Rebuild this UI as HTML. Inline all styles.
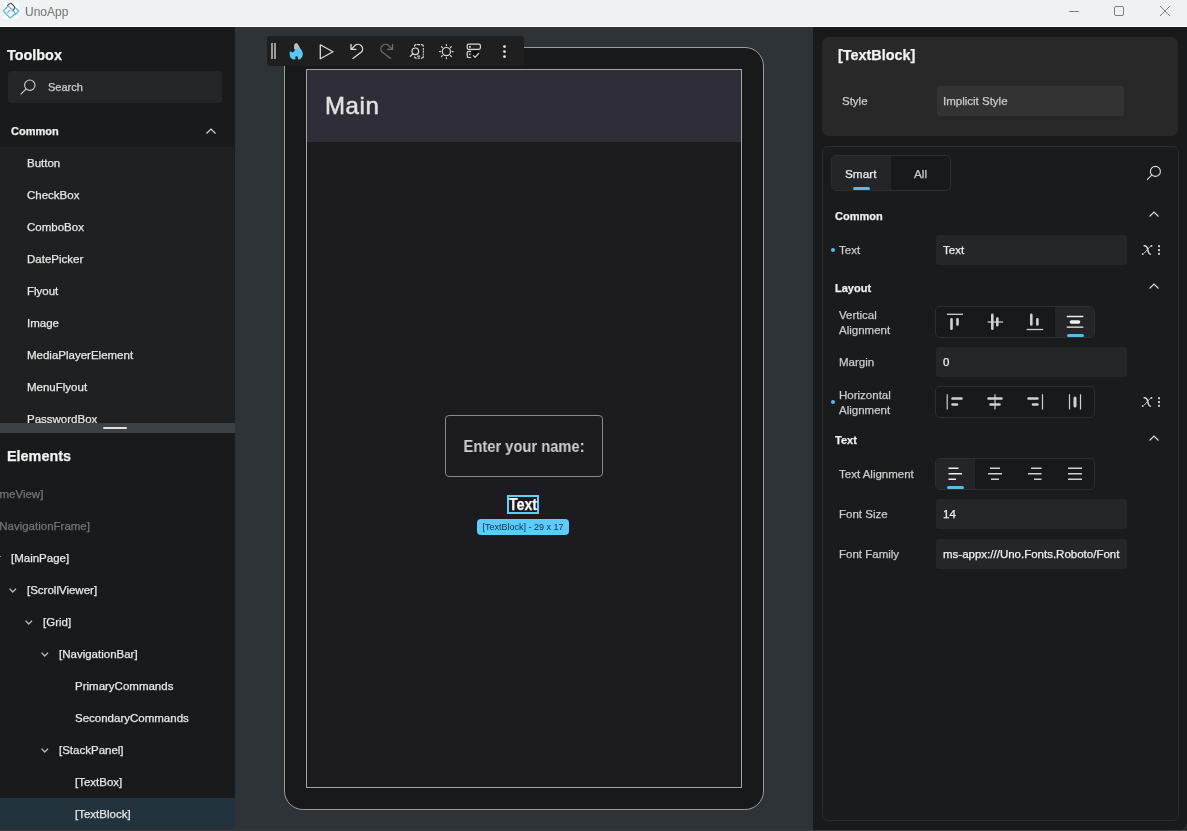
<!DOCTYPE html>
<html><head><meta charset="utf-8">
<style>
*{margin:0;padding:0;box-sizing:border-box}
html,body{-webkit-font-smoothing:antialiased;width:1187px;height:831px;overflow:hidden;background:#191a1c;font-family:"Liberation Sans",sans-serif;font-size:11.5px;color:#e4e4e4;position:relative}
.a{position:absolute}
.t{position:absolute;white-space:nowrap;line-height:14px;will-change:transform;-webkit-text-stroke:0.25px currentColor}
.b{font-weight:bold}
svg{position:absolute;overflow:visible}
</style></head><body>
<!-- ===== title bar ===== -->
<div class="a" style="left:0;top:0;width:1187px;height:26px;background:#eff2f3"></div>
<div class="a" style="left:0;top:26px;width:1187px;height:1px;background:#fdfdfd"></div>
<div class="a" style="left:3px;top:3px;width:16px;height:16px;background:#fafafa"></div>
<svg style="left:2px;top:2px" width="18" height="18" viewBox="0 0 18 18">
  <g fill="none" stroke-width="1.15" stroke-linejoin="round">
    <path d="M5.2 3.9 L7.6 1.6 Q8.6 0.8 9.6 1.7 L12.4 4.6 Q12.9 5.3 12.5 6.2 L10.6 9.2" stroke="#4a4a4a"/>
    <path d="M1.8 8.4 L5.7 4.6 Q6.3 4.1 6.9 4.6 L12.8 10.6 Q13.2 11.2 12.6 11.8 L9 15.6 Q8.4 16.2 7.8 15.6 L1.8 9.7 Q1.3 9.1 1.8 8.4 Z" stroke="#45b0ef"/>
    <path d="M13.2 5.6 L16.3 8.5 Q16.8 9.1 16.3 9.7 L12.6 13.2 M5.3 10.9 L8 8.2" stroke="#45b0ef"/>
  </g>
</svg>
<div class="t" style="left:25px;top:4px;font-size:12px;line-height:16px;color:#7a7a7a;-webkit-text-stroke:0.1px #7a7a7a">UnoApp</div>
<!-- window controls -->
<div class="a" style="left:1069px;top:11px;width:10px;height:1px;background:#7e7e7e"></div>
<div class="a" style="left:1114px;top:6px;width:10px;height:10px;border:1px solid #7e7e7e;border-radius:2px"></div>
<svg style="left:1160px;top:6px" width="10" height="10" viewBox="0 0 10 10"><path d="M0 0L10 10M10 0L0 10" stroke="#7e7e7e" stroke-width="1"/></svg>

<!-- ===== left panel ===== -->
<div class="a" style="left:0;top:27px;width:235px;height:803px;background:#191a1c"></div>
<div class="t b" style="left:7px;top:47px;font-size:14.4px;line-height:17px;color:#f2f2f2">Toolbox</div>
<div class="a" style="left:8px;top:71px;width:214px;height:32px;background:#252628;border-radius:4px"></div>
<svg style="left:20px;top:79px" width="16" height="16" viewBox="0 0 16 16"><circle cx="9.8" cy="6.2" r="5.2" fill="none" stroke="#cfcfcf" stroke-width="1.1"/><path d="M6.1 9.9 L0.7 15.3" stroke="#cfcfcf" stroke-width="1.1"/></svg>
<div class="t" style="left:48px;top:80px;font-size:11px;color:#cfcfcf">Search</div>
<div class="t b" style="left:11px;top:124px;font-size:11px;color:#eeeeee">Common</div>
<svg style="left:206px;top:128px" width="10" height="6" viewBox="0 0 10 6"><path d="M0.5 5.5 L5 1 L9.5 5.5" fill="none" stroke="#dcdcdc" stroke-width="1.1"/></svg>
<div class="a" style="left:0;top:147px;width:235px;height:276px;background:#1f2022"></div>
<div class="a" style="left:234px;top:27px;width:1px;height:803px;background:#1c1d1e"></div>
<div class="t" style="left:27px;top:156px;color:#e8e8e8">Button</div>
<div class="t" style="left:27px;top:188px;color:#e8e8e8">CheckBox</div>
<div class="t" style="left:27px;top:220px;color:#e8e8e8">ComboBox</div>
<div class="t" style="left:27px;top:252px;color:#e8e8e8">DatePicker</div>
<div class="t" style="left:27px;top:284px;color:#e8e8e8">Flyout</div>
<div class="t" style="left:27px;top:316px;color:#e8e8e8">Image</div>
<div class="t" style="left:27px;top:348px;color:#e8e8e8">MediaPlayerElement</div>
<div class="t" style="left:27px;top:380px;color:#e8e8e8">MenuFlyout</div>
<div class="t" style="left:27px;top:412px;color:#e8e8e8">PasswordBox</div>
<!-- splitter -->
<div class="a" style="left:0;top:423px;width:235px;height:10px;background:#3b4144"></div>
<div class="a" style="left:103px;top:427px;width:24px;height:2px;background:#e0e0e0;border-radius:1px"></div>
<div class="t b" style="left:7px;top:448px;font-size:14.4px;line-height:17px;color:#f2f2f2">Elements</div>
<div class="t" style="left:-21px;top:487px;color:#757575">[FrameView]</div>
<div class="t" style="left:-4px;top:519px;color:#757575">[NavigationFrame]</div>
<div class="t" style="left:11px;top:551px;color:#e8e8e8">[MainPage]</div>
<svg style="left:9px;top:588px" width="8" height="5" viewBox="0 0 8 5"><path d="M0.6 0.8 L3.8 4 L7 0.8" fill="none" stroke="#b8b8b8" stroke-width="1.3"/></svg>
<div class="t" style="left:27px;top:583px;color:#e8e8e8">[ScrollViewer]</div>
<svg style="left:25px;top:620px" width="8" height="5" viewBox="0 0 8 5"><path d="M0.6 0.8 L3.8 4 L7 0.8" fill="none" stroke="#b8b8b8" stroke-width="1.3"/></svg>
<div class="t" style="left:43px;top:615px;color:#e8e8e8">[Grid]</div>
<svg style="left:41px;top:652px" width="8" height="5" viewBox="0 0 8 5"><path d="M0.6 0.8 L3.8 4 L7 0.8" fill="none" stroke="#b8b8b8" stroke-width="1.3"/></svg>
<div class="t" style="left:59px;top:647px;color:#e8e8e8">[NavigationBar]</div>
<div class="t" style="left:75px;top:679px;color:#e8e8e8">PrimaryCommands</div>
<div class="t" style="left:75px;top:711px;color:#e8e8e8">SecondaryCommands</div>
<svg style="left:41px;top:748px" width="8" height="5" viewBox="0 0 8 5"><path d="M0.6 0.8 L3.8 4 L7 0.8" fill="none" stroke="#b8b8b8" stroke-width="1.3"/></svg>
<div class="t" style="left:59px;top:743px;color:#e8e8e8">[StackPanel]</div>
<div class="t" style="left:75px;top:775px;color:#e8e8e8">[TextBox]</div>
<div class="a" style="left:0;top:798px;width:235px;height:32px;background:#22333d"></div>
<div class="t" style="left:75px;top:807px;color:#e8e8e8">[TextBlock]</div>

<div class="a" style="left:0;top:556px;width:1px;height:1px;background:#8a8a8a"></div>
<!-- ===== canvas ===== -->
<div class="a" style="left:235px;top:27px;width:578px;height:803px;background:#2e3337"></div>
<!-- phone -->
<div class="a" style="left:284px;top:47px;width:480px;height:763px;background:#18191b;border:1px solid #9c9c9c;border-radius:19px"></div>
<div class="a" style="left:306px;top:69px;width:436px;height:719px;background:#1c1b20;border:1px solid #a4a4a4"></div>
<div class="a" style="left:307px;top:70px;width:434px;height:72px;background:#2f2d38"></div>
<div class="t" style="left:325px;top:92px;font-size:24px;line-height:28px;color:#e2e2e2;letter-spacing:0.6px;-webkit-text-stroke:0.5px #e2e2e2">Main</div>
<!-- text box -->
<div class="a" style="left:445px;top:415px;width:158px;height:62px;border:1px solid #8a8a8a;border-radius:4px"></div>
<div class="t b" style="left:445px;width:158px;text-align:center;top:438px;font-size:16px;line-height:18px;color:#cdcdcd;transform:scaleX(0.92);-webkit-text-stroke:0">Enter your name:</div>
<div class="a" style="left:507px;top:495px;width:32px;height:19px;border:2px solid #5ccfff"></div>
<div class="t b" style="left:503px;width:40px;text-align:center;top:496px;font-size:16.6px;line-height:17px;color:#ffffff;transform:scaleX(0.85)">Text</div>
<div class="a" style="left:477px;top:519px;width:92px;height:16px;background:#5ccbff;border-radius:4px"></div>
<div class="t" style="left:477px;width:92px;text-align:center;top:520px;font-size:9px;line-height:14px;color:#1f2c33;-webkit-text-stroke:0">[TextBlock] - 29 x 17</div>

<!-- toolbar -->
<div class="a" style="left:267px;top:36px;width:257px;height:30px;background:#1f1f20;border-radius:3px 3px 2px 3px"></div>
<div class="a" style="left:271px;top:43px;width:2px;height:16px;background:#9c9c9c"></div>
<div class="a" style="left:274px;top:43px;width:2px;height:16px;background:#9c9c9c"></div>


<!-- toolbar icons -->
<svg style="left:0;top:0" width="1187" height="831" viewBox="0 0 1187 831">
 <g transform="translate(286,40)">
  <path d="M8.1 9.2 L8 6.2 C8 4.6 9.2 3.1 10.6 3 C11.5 3.3 12.2 4.6 12.9 6 L14.6 9.2 Z" fill="#bdbdbd"/>
  <path d="M9 8.8 L14.5 8.8 C16 10.3 16.9 12.4 16.8 14.6 C16.7 17.2 15 19.2 12.9 19.6 L11.9 19.6 L11.9 16.9 C11.5 16.2 9.8 16.1 9.4 16.8 L9.3 19.6 L8 19.6 C5.5 19.3 3.7 17.4 3.7 14.6 L3.7 11.6 C4.6 11.1 5.6 11.6 6.6 12.4 C8 12.2 8.9 10.8 9 8.8 Z" fill="#5ac8f5"/>
 </g>
 <path d="M320.3 44.8 L333 51.8 L320.3 58.8 Z" fill="none" stroke="#dcdcdc" stroke-width="1.3" stroke-linejoin="round"/>
 <g transform="translate(346,40)" fill="none" stroke-width="1.3" stroke-linecap="round" stroke-linejoin="round">
  <g stroke="#dedede"><path d="M5 4.3 V9.4 H9.9"/><path d="M5.5 9 L8.9 5.6 A4.6 4.6 0 0 1 15.4 12.1 L6.9 18.4"/></g>
  <g stroke="#6e6e6e" transform="translate(51.5,0) scale(-1,1)"><path d="M5 4.3 V9.4 H9.9"/><path d="M5.5 9 L8.9 5.6 A4.6 4.6 0 0 1 15.4 12.1 L6.9 18.4"/></g>
 </g>
 <g transform="translate(406,40)" fill="none" stroke="#dcdcdc" stroke-width="1.2" stroke-linecap="round">
  <path d="M8.6 6.2 V5.9 Q8.6 4.6 9.9 4.6 H10"/>
  <path d="M11.6 4.6 H13.6"/>
  <path d="M15.4 4.6 Q17.3 4.6 17.3 6.2"/>
  <path d="M17.3 8.6 V9.4 M17.3 11.2 V12.2 M17.3 14 V14.9"/>
  <path d="M17.3 16.6 Q17.3 18.2 15.6 18.2"/>
  <path d="M12.2 18.2 H13.4"/>
  <path d="M8.6 16.8 Q8.6 18.2 10.2 18.2"/>
  <circle cx="9.3" cy="11.3" r="3.3"/>
  <path d="M6.9 13.8 L4.2 16.4"/>
  <path d="M11.7 16.2 H13.6"/>
 </g>
 <g transform="translate(406,40)" fill="none" stroke="#dcdcdc" stroke-width="1.2" stroke-linecap="round">
  <circle cx="40.4" cy="11.6" r="4.1"/>
  <path d="M40.4 4.6 V5.6 M40.4 17.6 V18.6 M33.6 11.6 H34.6 M46.2 11.6 H47.2 M35.5 6.7 L36.3 7.5 M44.5 15.7 L45.3 16.5 M35.5 16.5 L36.3 15.7 M44.5 7.5 L45.3 6.7"/>
 </g>
 <g transform="translate(462,38)">
  <g fill="none" stroke="#dcdcdc" stroke-width="1.2" stroke-linecap="round">
   <rect x="5.2" y="6.2" width="13.2" height="5.1" rx="1.5"/>
   <path d="M8.6 13.4 H6.8 Q5.2 13.4 5.2 15 V17.9 Q5.2 19.5 6.8 19.5 H8.6"/>
  </g>
  <rect x="7" y="8.1" width="1.8" height="1.6" fill="#dcdcdc"/>
  <rect x="7" y="15.6" width="1.4" height="1.4" fill="#dcdcdc"/>
  <circle cx="13.9" cy="16.9" r="4.1" fill="#0e0e0f"/>
  <path d="M11.3 17.6 L13.1 19.3 L16.7 15.5" fill="none" stroke="#dcdcdc" stroke-width="1.2" stroke-linecap="round" stroke-linejoin="round"/>
 </g>
 <g fill="#e6e6e6"><circle cx="504.5" cy="46.6" r="1.4"/><circle cx="504.5" cy="51.6" r="1.4"/><circle cx="504.5" cy="56.6" r="1.4"/></g>
</svg>
<!-- ===== right panel ===== -->
<div class="a" style="left:813px;top:27px;width:374px;height:803px;background:#191a1c"></div>
<div class="a" style="left:822px;top:37px;width:356px;height:99px;background:#282829;border-radius:7px"></div>
<div class="t b" style="left:838px;top:47px;font-size:14.4px;line-height:17px;color:#f2f2f2">[TextBlock]</div>
<div class="t" style="left:842px;top:94px;color:#cccccc">Style</div>
<div class="a" style="left:937px;top:86px;width:187px;height:30px;background:#333334;border-radius:3px"></div>
<div class="t" style="left:943px;top:94px;color:#cccccc">Implicit Style</div>

<div class="a" style="left:822px;top:146px;width:357px;height:675px;background:#1a1b1d;border:1px solid #2b2c2e;border-radius:6px"></div>
<div class="a" style="left:831px;top:155px;width:120px;height:36px;border:1px solid #2e2f31;border-radius:5px;background:#18191b"></div>
<div class="a" style="left:832px;top:156px;width:59px;height:34px;background:#242528;border-radius:4px 0 0 4px"></div>
<div class="a" style="left:853px;top:187px;width:17px;height:3px;background:#5ab9e6;border-radius:2px"></div>
<div class="t" style="left:845px;top:167px;font-size:11.8px;color:#efefef">Smart</div>
<div class="t" style="left:914px;top:167px;font-size:11.8px;color:#cccccc">All</div>
<svg style="left:1145px;top:165px" width="17" height="17" viewBox="0 0 17 17"><circle cx="10.4" cy="6.4" r="5" fill="none" stroke="#d8d8d8" stroke-width="1.1"/><path d="M6.9 9.9 L2 14.8" stroke="#d8d8d8" stroke-width="1.1"/></svg>

<div class="t b" style="left:835px;top:209px;font-size:11px;color:#eeeeee">Common</div>
<svg style="left:1149px;top:211px" width="10" height="6" viewBox="0 0 10 6"><path d="M0.5 5.5 L5 1 L9.5 5.5" fill="none" stroke="#dcdcdc" stroke-width="1.1"/></svg>
<div class="a" style="left:831px;top:248px;width:4px;height:4px;background:#5ab9e6;border-radius:2px"></div>
<div class="t" style="left:839px;top:243px;color:#cccccc">Text</div>
<div class="a" style="left:936px;top:235px;width:191px;height:30px;background:#252628;border-radius:3px"></div>
<div class="t" style="left:943px;top:243px;color:#f0f0f0">Text</div>

<div class="t b" style="left:835px;top:281px;font-size:11px;color:#eeeeee">Layout</div>
<svg style="left:1149px;top:283px" width="10" height="6" viewBox="0 0 10 6"><path d="M0.5 5.5 L5 1 L9.5 5.5" fill="none" stroke="#dcdcdc" stroke-width="1.1"/></svg>
<div class="t" style="left:839px;top:308px;color:#cccccc">Vertical</div>
<div class="t" style="left:839px;top:323px;color:#cccccc">Alignment</div>
<div class="t" style="left:839px;top:355px;color:#cccccc">Margin</div>
<div class="a" style="left:936px;top:347px;width:191px;height:30px;background:#252628;border-radius:3px"></div>
<div class="t" style="left:943px;top:355px;color:#f0f0f0">0</div>
<div class="a" style="left:831px;top:400px;width:4px;height:4px;background:#5ab9e6;border-radius:2px"></div>
<div class="t" style="left:839px;top:388px;color:#cccccc">Horizontal</div>
<div class="t" style="left:839px;top:403px;color:#cccccc">Alignment</div>

<div class="t b" style="left:835px;top:433px;font-size:11px;color:#eeeeee">Text</div>
<svg style="left:1149px;top:435px" width="10" height="6" viewBox="0 0 10 6"><path d="M0.5 5.5 L5 1 L9.5 5.5" fill="none" stroke="#dcdcdc" stroke-width="1.1"/></svg>
<div class="t" style="left:839px;top:467px;color:#cccccc">Text Alignment</div>
<div class="t" style="left:839px;top:507px;color:#cccccc">Font Size</div>
<div class="a" style="left:936px;top:499px;width:191px;height:30px;background:#252628;border-radius:3px"></div>
<div class="t" style="left:943px;top:507px;color:#f0f0f0">14</div>
<div class="t" style="left:839px;top:547px;color:#cccccc">Font Family</div>
<div class="a" style="left:936px;top:539px;width:191px;height:30px;background:#252628;border-radius:3px;overflow:hidden"><div class="t" style="left:7px;top:8px;color:#f0f0f0">ms-appx:///Uno.Fonts.Roboto/Font</div></div>


<!-- vertical alignment segmented -->
<div class="a" style="left:935px;top:306px;width:160px;height:32px;border:1px solid #2e2f31;border-radius:5px;background:#18191b"></div>
<div class="a" style="left:1055px;top:307px;width:39px;height:30px;background:#242528;border-radius:0 4px 4px 0"></div>
<div class="a" style="left:1067px;top:334px;width:17px;height:3px;background:#5ab9e6;border-radius:2px"></div>
<svg style="left:935px;top:306px" width="160" height="32" viewBox="0 0 160 32">
 <g stroke="#d0d0d0" fill="none">
  <path d="M11.9 8.3 H28" stroke-width="1.3"/>
  <path d="M16.5 13.2 V22.8 M22.5 13.2 V18.5" stroke-width="2.6" stroke-linecap="round"/>
  <path d="M52.6 16 H68.1" stroke-width="1.3"/>
  <path d="M57.3 8.9 V22.8 M62.3 12.5 V19.2" stroke-width="2.6" stroke-linecap="round"/>
  <path d="M91.7 23.5 H108.2" stroke-width="1.3"/>
  <path d="M96.3 8.9 V18.5 M102.4 13.2 V18.5" stroke-width="2.6" stroke-linecap="round"/>
  <path d="M131.8 10.5 H148.3 M131.8 21.2 H148.3" stroke-width="1.3" stroke="#f0f0f0"/>
  <path d="M136.5 16 H143.5" stroke-width="3.6" stroke="#f0f0f0" stroke-linecap="round"/>
 </g>
</svg>
<!-- horizontal alignment segmented -->
<div class="a" style="left:935px;top:386px;width:160px;height:32px;border:1px solid #2e2f31;border-radius:5px;background:#18191b"></div>
<svg style="left:935px;top:386px" width="160" height="32" viewBox="0 0 160 32">
 <g stroke="#d0d0d0" fill="none">
  <path d="M12.2 8.2 V23.6" stroke-width="1.2"/>
  <path d="M17.5 12.5 H26.5 M17.5 18.5 H22" stroke-width="2.6" stroke-linecap="round"/>
  <path d="M60 8.2 V23.6" stroke-width="1.2"/>
  <path d="M53.5 12.5 H66.5 M55.5 18.5 H64.5" stroke-width="2.6" stroke-linecap="round"/>
  <path d="M107.5 8.2 V23.6" stroke-width="1.2"/>
  <path d="M93.5 12.5 H102.5 M98 18.5 H102.5" stroke-width="2.6" stroke-linecap="round"/>
  <path d="M134.5 8.2 V23.6 M145.5 8.2 V23.6" stroke-width="1.2"/>
  <path d="M140 12 V20" stroke-width="3" stroke-linecap="round"/>
 </g>
</svg>
<!-- text alignment segmented -->
<div class="a" style="left:935px;top:458px;width:160px;height:32px;border:1px solid #2e2f31;border-radius:5px;background:#18191b"></div>
<div class="a" style="left:936px;top:459px;width:39px;height:30px;background:#242528;border-radius:4px 0 0 4px"></div>
<div class="a" style="left:947px;top:486px;width:17px;height:3px;background:#5ab9e6;border-radius:2px"></div>
<svg style="left:935px;top:458px" width="160" height="32" viewBox="0 0 160 32">
 <g stroke="#d0d0d0" stroke-width="1.4" fill="none">
  <path d="M13.5 10.3 H23.5 M13.5 15.8 H27 M13.5 21.3 H21" stroke="#f0f0f0"/>
  <path d="M55 10.3 H65 M53 15.8 H67 M56 21.3 H64"/>
  <path d="M96 10.3 H106.5 M93 15.8 H106.5 M99 21.3 H106.5"/>
  <path d="M133 10.3 H147 M133 15.8 H147 M133 21.3 H147"/>
 </g>
</svg>
<!-- fx icons -->
<svg style="left:0;top:0" width="1187" height="831" viewBox="0 0 1187 831">
 <defs><g id="fx">
  <path d="M7.6 9.8 C9.6 9.3 10.9 10.2 11.5 12.6 L12.5 16.4 C12.9 17.8 13.7 18.4 14.9 18.3" stroke="#d4d4d4" stroke-width="1.5" fill="none"/>
  <path d="M6.3 18.3 C7.1 18.2 7.7 17.8 8.4 17 L13.8 10.8 C14.5 10 15.1 9.8 15.9 9.8" stroke="#d4d4d4" stroke-width="0.9" fill="none"/>
  <circle cx="6.6" cy="18.1" r="0.9" fill="#d4d4d4"/><circle cx="15.6" cy="9.9" r="0.9" fill="#d4d4d4"/>
  <rect x="22" y="9.2" width="2" height="2" fill="#c8c8c8"/><rect x="22" y="13.1" width="2" height="2" fill="#c8c8c8"/><rect x="22" y="16.8" width="2" height="2" fill="#c8c8c8"/>
 </g></defs>
 <use href="#fx" x="1136" y="236"/>
 <use href="#fx" x="1136" y="388"/>
</svg>
<div class="a" style="left:0;top:830px;width:1187px;height:1px;background:#3a3a3a"></div>
<svg style="left:0;top:0" width="1187" height="831" viewBox="0 0 1187 831"><path d="M1170 830.5 H1181 A6 6 0 0 0 1187 824.5" fill="none" stroke="#444" stroke-width="1"/></svg>
</body></html>
